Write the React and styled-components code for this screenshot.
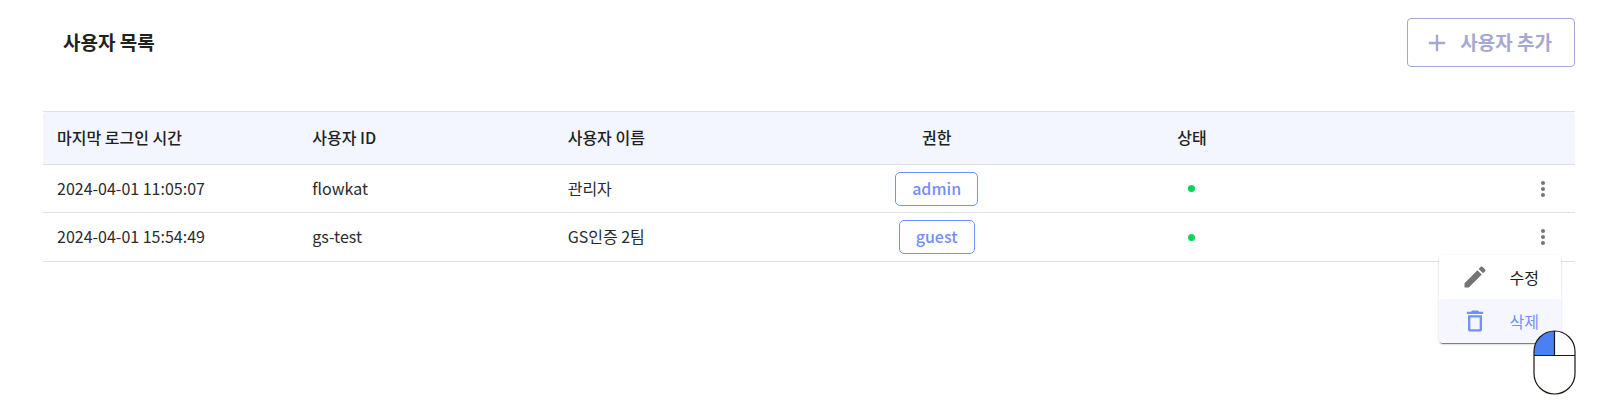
import styled, { createGlobalStyle } from "styled-components";
import {
  MdAdd,
  MdDeleteOutline,
  MdEdit,
  MdMoreVert,
} from "react-icons/md";

const columns = [
  { label: "마지막 로그인 시간" },
  { label: "사용자 ID" },
  { label: "사용자 이름" },
  { label: "권한", align: "center" },
  { label: "상태", align: "center" },
  { label: "", align: "right" },
];

const users = [
  {
    id: "flowkat",
    lastLogin: "2024-04-01 11:05:07",
    name: "관리자",
    role: "admin",
  },
  {
    id: "gs-test",
    lastLogin: "2024-04-01 15:54:49",
    name: "GS인증 2팀",
    role: "guest",
    menuOpen: true,
  },
];

const MouseIcon = () => (
  <Mouse width="43" height="66" viewBox="0 0 43 66" aria-hidden="true">
    <rect x="1" y="1" width="41" height="63" rx="20.5" fill="#fff" />
    <path d="M21.5 1A20.5 20.5 0 0 0 1 21.5V26h20.5z" fill="#4a80f6" />
    <g fill="none" stroke="#1f1610" strokeWidth="1.2">
      <rect x="1" y="1" width="41" height="63" rx="20.5" />
      <path d="M1 25.5h41M21.5 1v25" />
    </g>
  </Mouse>
);

const RowMenu = () => (
  <Menu role="menu">
    <MenuItem role="menuitem">
      <MdEdit size={28} />
      수정
    </MenuItem>
    <MenuItem role="menuitem" $active>
      <MdDeleteOutline size={28} />
      삭제
    </MenuItem>
    <MouseIcon />
  </Menu>
);

const App = () => {
  return (
    <>
      <GlobalStyle />
      <Page>
        <Header>
          <h1>사용자 목록</h1>
          <AddButton type="button">
            <MdAdd size={28} />
            <span>사용자 추가</span>
          </AddButton>
        </Header>
        <Table>
          <thead>
            <tr>
              {columns.map(({ label, align }, i) => (
                <HeadCell key={i} $align={align}>
                  {label}
                </HeadCell>
              ))}
            </tr>
          </thead>
          <tbody>
            {users.map((user) => (
              <tr key={user.id}>
                <Cell>{user.lastLogin}</Cell>
                <Cell>{user.id}</Cell>
                <Cell>{user.name}</Cell>
                <Cell $align="center">
                  <Role>{user.role}</Role>
                </Cell>
                <Cell $align="center">
                  <Status role="img" aria-label="활성" />
                </Cell>
                <Cell $align="right">
                  <MoreButton
                    type="button"
                    aria-label="더보기"
                    aria-expanded={!!user.menuOpen}
                  >
                    <MdMoreVert size={24} />
                  </MoreButton>
                  {user.menuOpen && <RowMenu />}
                </Cell>
              </tr>
            ))}
          </tbody>
        </Table>
      </Page>
    </>
  );
};

export default App;

const GlobalStyle = createGlobalStyle`
  * {
    box-sizing: border-box;
  }

  body {
    margin: 0;
    background: #fff;
    color: #212121;
    font-family: "Noto Sans CJK KR", sans-serif;
    font-size: 16px;
    line-height: 24px;
  }

  button {
    font: inherit;
    cursor: pointer;
  }
`;

const Page = styled.main`
  min-height: 100vh;
  padding: 18px 38px 18px 43px;
`;

const Header = styled.header`
  display: flex;
  align-items: center;
  justify-content: space-between;
  padding-left: 20px;
  margin-bottom: 44px;

  h1 {
    margin: 0;
    padding-bottom: 2px;
    font-size: 19px;
    font-weight: 700;
  }
`;

const AddButton = styled.button`
  display: flex;
  align-items: center;
  gap: 9px;
  height: 49px;
  padding: 0 22px 0 15px;
  border: 1px solid #a5a8d3;
  border-radius: 4px;
  background: #fff;
  color: #a5a8d3;
  font-size: 19px;
  font-weight: 700;

  span {
    padding-bottom: 2px;
  }
`;

const Table = styled.table`
  width: 100%;
  table-layout: fixed;
  border-collapse: separate;
  border-spacing: 0;
  border-top: 1px solid #e0e0e0;
`;

const HeadCell = styled.th`
  height: 53px;
  padding: 0 14px 2px;
  border-bottom: 1px solid #e0e0e0;
  background: #f3f6ff;
  font-weight: 500;
  text-align: ${({ $align }) => $align || "left"};

  &:first-child {
    border-top-left-radius: 4px;
  }
  &:last-child {
    border-top-right-radius: 4px;
  }
`;

const Cell = styled.td`
  position: relative;
  height: 48px;
  padding: ${({ $align }) => ($align ? "0 14px" : "0 14px 2px")};
  border-bottom: 1px solid #e0e0e0;
  color: #2b2b2b;
  text-align: ${({ $align }) => $align || "left"};
  vertical-align: middle;

  tr:last-child > & {
    height: 49px;
  }
`;

const Role = styled.span`
  display: inline-block;
  padding: 3px 16px 5px;
  border: 1px solid #738eff;
  border-radius: 5px;
  color: #738eff;
  font-weight: 500;
  vertical-align: middle;
`;

const Status = styled.span`
  display: block;
  width: 7px;
  height: 7px;
  margin: 0 auto;
  border-radius: 50%;
  background: #00d957;
`;

const MoreButton = styled.button`
  display: block;
  margin-left: auto;
  padding: 6px;
  border: 0;
  background: none;
  color: #757575;

  svg {
    display: block;
  }
`;

const Menu = styled.div`
  position: absolute;
  z-index: 1;
  top: 42px;
  right: 14px;
  width: 122px;
  border-radius: 4px;
  background: #fff;
  box-shadow: 0 2px 1px -1px rgba(0, 0, 0, 0.5), 0 1px 3px rgba(0, 0, 0, 0.15);
`;

const MenuItem = styled.button`
  display: flex;
  align-items: center;
  justify-content: space-between;
  width: 100%;
  height: 44px;
  padding: 0 22px;
  border: 0;
  border-radius: 4px;
  background: ${({ $active }) => ($active ? "#f5f6ff" : "#fff")};
  color: ${({ $active }) => ($active ? "#738eff" : "#212121")};

  svg {
    color: ${({ $active }) => ($active ? "#738eff" : "#757575")};
  }
`;

const Mouse = styled.svg`
  position: absolute;
  top: 75px;
  right: -15px;
`;
